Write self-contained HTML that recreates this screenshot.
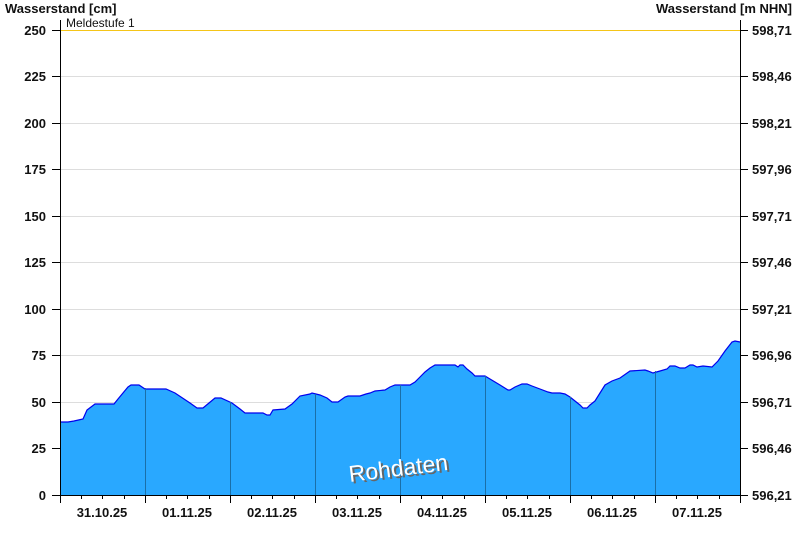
<!DOCTYPE html>
<html><head><meta charset="utf-8"><style>
html,body{margin:0;padding:0;background:#fff;}
svg{display:block;font-family:"Liberation Sans",Arial,sans-serif;}
</style></head><body>
<svg width="800" height="550" viewBox="0 0 800 550" xmlns="http://www.w3.org/2000/svg">
<g stroke="#dddddd" stroke-width="1">
<line x1="60" y1="76.5" x2="740" y2="76.5"/><line x1="60" y1="123.5" x2="740" y2="123.5"/>
<line x1="60" y1="169.5" x2="740" y2="169.5"/><line x1="60" y1="216.5" x2="740" y2="216.5"/>
<line x1="60" y1="262.5" x2="740" y2="262.5"/><line x1="60" y1="309.5" x2="740" y2="309.5"/>
<line x1="60" y1="355.5" x2="740" y2="355.5"/><line x1="60" y1="402.5" x2="740" y2="402.5"/>
<line x1="60" y1="448.5" x2="740" y2="448.5"/>
</g>
<line x1="60" y1="30.5" x2="740" y2="30.5" stroke="#f5c518" stroke-width="1"/>
<polygon fill="#29a8ff" stroke="none" points="60,495 60,422 68,422 74,421 83,419 87,410 95,404 114,404 118,399 128,387 131,385 139,385 145,389 150,389 166,389 175,393 190,403 197,408 203,408 215,398 221,398 232,403 240,409 245,413 263,413 267,415 270,415 273,410 285,409 292,404 300,396 310,394 312,393 320,395 327,398 332,402 338,402 345,397 348,396 360,396 366,394 370,393 375,391 385,390 390,387 395,385 410,385 415,382 420,377 425,372 430,368 435,365 455,365 458,367 460,365 463,365 467,369 472,373 475,376 485,376 490,379 500,385 508,390 510,390 515,387 522,384 527,384 532,386 540,389 548,392 552,393 560,393 565,394 570,397 575,401 580,405 583,408 587,408 590,405 595,401 600,393 605,385 612,381 620,378 630,371 645,370 648,371 653,373 660,371 667,369 670,366 675,366 680,368 685,368 690,365 693,365 697,367 703,366 712,367 718,361 725,351 732,342 735,341 740,342 740,495"/>
<polyline fill="none" stroke="#0000ee" stroke-width="1.2" points="60,422 68,422 74,421 83,419 87,410 95,404 114,404 118,399 128,387 131,385 139,385 145,389 150,389 166,389 175,393 190,403 197,408 203,408 215,398 221,398 232,403 240,409 245,413 263,413 267,415 270,415 273,410 285,409 292,404 300,396 310,394 312,393 320,395 327,398 332,402 338,402 345,397 348,396 360,396 366,394 370,393 375,391 385,390 390,387 395,385 410,385 415,382 420,377 425,372 430,368 435,365 455,365 458,367 460,365 463,365 467,369 472,373 475,376 485,376 490,379 500,385 508,390 510,390 515,387 522,384 527,384 532,386 540,389 548,392 552,393 560,393 565,394 570,397 575,401 580,405 583,408 587,408 590,405 595,401 600,393 605,385 612,381 620,378 630,371 645,370 648,371 653,373 660,371 667,369 670,366 675,366 680,368 685,368 690,365 693,365 697,367 703,366 712,367 718,361 725,351 732,342 735,341 740,342"/>
<g stroke="#1a6fa8" stroke-width="1">
<line x1="145.5" y1="388" x2="145.5" y2="495"/><line x1="230.5" y1="402" x2="230.5" y2="495"/>
<line x1="315.5" y1="394" x2="315.5" y2="495"/><line x1="400.5" y1="385" x2="400.5" y2="495"/>
<line x1="485.5" y1="376" x2="485.5" y2="495"/><line x1="570.5" y1="397" x2="570.5" y2="495"/>
<line x1="655.5" y1="371" x2="655.5" y2="495"/>
</g>
<g stroke="#000" stroke-width="1">
<line x1="60.5" y1="20" x2="60.5" y2="495"/>
<line x1="740.5" y1="20" x2="740.5" y2="495"/>
<line x1="60" y1="495.5" x2="741" y2="495.5"/>
<path d="M52 30.5H60M52 76.5H60M52 123.5H60M52 169.5H60M52 216.5H60M52 262.5H60M52 309.5H60M52 355.5H60M52 402.5H60M52 448.5H60M52 495.5H60"/>
<path d="M740 30.5H748M740 76.5H748M740 123.5H748M740 169.5H748M740 216.5H748M740 262.5H748M740 309.5H748M740 355.5H748M740 402.5H748M740 448.5H748M740 495.5H748"/>
<path d="M60.5 495V503M145.5 495V503M230.5 495V503M315.5 495V503M400.5 495V503M485.5 495V503M570.5 495V503M655.5 495V503M740.5 495V503"/>
<path d="M81.5 495V499M102.5 495V499M124.5 495V499M166.5 495V499M187.5 495V499M209.5 495V499M251.5 495V499M272.5 495V499M294.5 495V499M336.5 495V499M357.5 495V499M379.5 495V499M421.5 495V499M442.5 495V499M464.5 495V499M506.5 495V499M527.5 495V499M549.5 495V499M591.5 495V499M612.5 495V499M634.5 495V499M676.5 495V499M697.5 495V499M719.5 495V499"/>
</g>
<g font-size="13" font-weight="bold" fill="#111">
<text x="5" y="13">Wasserstand [cm]</text>
<text x="792" y="13" text-anchor="end">Wasserstand [m NHN]</text>
</g>
<text x="66" y="27" font-size="12" fill="#111">Meldestufe 1</text>
<g font-size="13" font-weight="bold" fill="#111" text-anchor="end">
<text x="46" y="35">250</text><text x="46" y="81">225</text><text x="46" y="128">200</text>
<text x="46" y="174">175</text><text x="46" y="221">150</text><text x="46" y="267">125</text>
<text x="46" y="314">100</text><text x="46" y="360">75</text><text x="46" y="407">50</text>
<text x="46" y="453">25</text><text x="46" y="500">0</text>
</g>
<g font-size="13" font-weight="bold" fill="#111">
<text x="752" y="35">598,71</text><text x="752" y="81">598,46</text><text x="752" y="128">598,21</text>
<text x="752" y="174">597,96</text><text x="752" y="221">597,71</text><text x="752" y="267">597,46</text>
<text x="752" y="314">597,21</text><text x="752" y="360">596,96</text><text x="752" y="407">596,71</text>
<text x="752" y="453">596,46</text><text x="752" y="500">596,21</text>
</g>
<g font-size="13" font-weight="bold" fill="#111" text-anchor="middle">
<text x="102" y="517">31.10.25</text><text x="187" y="517">01.11.25</text><text x="272" y="517">02.11.25</text>
<text x="357" y="517">03.11.25</text><text x="442" y="517">04.11.25</text><text x="527" y="517">05.11.25</text>
<text x="612" y="517">06.11.25</text><text x="697" y="517">07.11.25</text>
</g>
<g transform="rotate(-7 398 466)" font-size="23">
<text x="400" y="478" text-anchor="middle" fill="#666">Rohdaten</text>
<text x="398" y="476" text-anchor="middle" fill="#fff">Rohdaten</text>
</g>
</svg>
</body></html>
